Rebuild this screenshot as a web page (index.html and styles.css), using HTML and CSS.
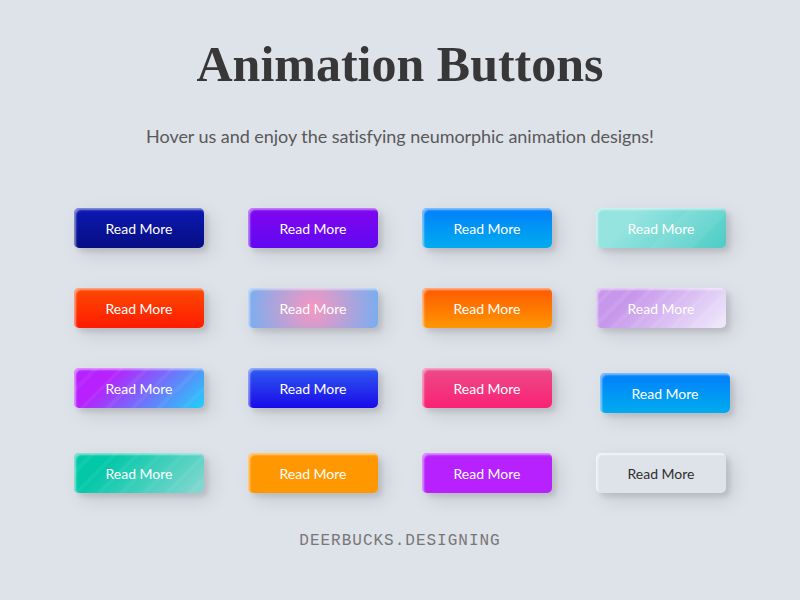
FILE: index.html
```html
<!DOCTYPE html>
<html lang="en">
<head>
<meta charset="utf-8">
<title>Animation Buttons</title>
<link rel="stylesheet" href="styles.css">
</head>
<body>
  <h1 class="title">Animation Buttons</h1>
  <p class="subtitle">Hover us and enjoy the satisfying neumorphic animation designs!</p>
  <div class="frame">
    <button class="custom-btn btn-navy">Read More</button>
    <button class="custom-btn btn-violet">Read More</button>
    <button class="custom-btn btn-sky">Read More</button>
    <button class="custom-btn btn-mint">Read More</button>
    <button class="custom-btn btn-red">Read More</button>
    <button class="custom-btn btn-radial">Read More</button>
    <button class="custom-btn btn-orange">Read More</button>
    <button class="custom-btn btn-lavender">Read More</button>
    <button class="custom-btn btn-purple-cyan">Read More</button>
    <button class="custom-btn btn-blue">Read More</button>
    <button class="custom-btn btn-pink">Read More</button>
    <button class="custom-btn btn-sky btn-shifted">Read More</button>
    <button class="custom-btn btn-teal last-row">Read More</button>
    <button class="custom-btn btn-amber last-row">Read More</button>
    <button class="custom-btn btn-magenta last-row">Read More</button>
    <button class="custom-btn btn-plain last-row">Read More</button>
  </div>
  <p class="footer">DEERBUCKS.DESIGNING</p>
</body>
</html>
```

FILE: styles.css
```css
html, body {
  margin: 0;
  padding: 0;
}
body {
  background: #dee2e9;
  width: 800px;
  height: 600px;
  overflow: hidden;
}
.title {
  margin: 35px 0 0;
  font-family: "Liberation Serif", "Times New Roman", serif;
  font-weight: bold;
  font-size: 50px;
  line-height: 58px;
  color: #373737;
  text-align: center;
}
.subtitle {
  margin: 31px 0 0;
  font-family: Lato, "Noto Sans", sans-serif;
  font-size: 18px;
  letter-spacing: -0.05px;
  line-height: 24px;
  color: #595959;
  text-align: center;
}
.frame {
  margin: 60px 0 0;
  display: grid;
  grid-template-columns: repeat(4, 130px);
  column-gap: 44px;
  row-gap: 40px;
  justify-content: center;
}
.custom-btn {
  width: 130px;
  height: 40px;
  padding: 0;
  border: none;
  border-radius: 5px;
  color: #fff;
  font-family: Lato, "Noto Sans", sans-serif;
  font-size: 14px;
  display: flex;
  align-items: center;
  justify-content: center;
  box-shadow: inset 2px 2px 2px 0 rgba(255,255,255,.5),
              7px 7px 20px 0 rgba(0,0,0,.1),
              4px 4px 5px 0 rgba(0,0,0,.1);
}
.last-row {
  margin-top: 5px;
}
.btn-navy { background: linear-gradient(0deg, #060e83 0%, #0c19b4 100%); }
.btn-violet { background: linear-gradient(0deg, #6009f0 0%, #8105f0 100%); }
.btn-sky { background: linear-gradient(0deg, #00acee 0%, #027efb 100%); }
.btn-mint {
  background-color: #4dccc6;
  background-image:
    linear-gradient(135deg, rgba(255,255,255,0) 55%, rgba(255,255,255,.06) 55%, rgba(255,255,255,.06) 80%, rgba(255,255,255,0) 80%),
    linear-gradient(315deg, #4dccc6 0%, #96e4df 74%);
}
.btn-red { background: linear-gradient(0deg, #ff1b00 0%, #fb4b02 100%); }
.btn-radial { background: radial-gradient(circle, #f796c0 0%, #76aef1 100%); }
.btn-orange { background: linear-gradient(0deg, #ff9600 0%, #ff5800 100%); }
.btn-lavender {
  background-color: #f0ecfc;
  background-image:
    repeating-linear-gradient(135deg, rgba(255,255,255,0) 0px, rgba(255,255,255,0) 10px, rgba(255,255,255,.08) 10px, rgba(255,255,255,.08) 14px),
    linear-gradient(315deg, #f0ecfc 0%, #c797eb 74%);
}
.btn-purple-cyan {
  background-color: #1fd1f9;
  background-image:
    repeating-linear-gradient(135deg, rgba(255,255,255,0) 0px, rgba(255,255,255,0) 14px, rgba(255,255,255,.05) 14px, rgba(255,255,255,.05) 18px),
    linear-gradient(315deg, #1fd1f9 0%, #b621fe 74%);
}
.btn-blue { background: linear-gradient(0deg, #1a0ae9 0%, #2f5cf0 100%); }
.btn-pink { background: linear-gradient(0deg, #fb2175 0%, #ea4c89 100%); }
.btn-shifted {
  transform: translate(4px, 5px);
}
.btn-teal {
  background-color: #89d8d3;
  background-image:
    repeating-linear-gradient(135deg, rgba(255,255,255,0) 0px, rgba(255,255,255,0) 12px, rgba(255,255,255,.05) 12px, rgba(255,255,255,.05) 16px),
    linear-gradient(315deg, #89d8d3 0%, #03c8a8 74%);
}
.btn-amber { background: #ff9800; }
.btn-magenta { background: #b621fe; }
.btn-plain {
  background: #dee2e9;
  color: #2f2f2f;
  box-shadow: inset 2px 2px 2px 0 rgba(255,255,255,.6),
              7px 7px 20px 0 rgba(0,0,0,.1),
              4px 4px 5px 0 rgba(0,0,0,.1);
}
.footer {
  margin: 38px 0 0;
  font-family: "Liberation Mono", "Courier New", monospace;
  font-size: 16px;
  letter-spacing: 1px;
  line-height: 20px;
  color: #777;
  text-align: center;
}
```
